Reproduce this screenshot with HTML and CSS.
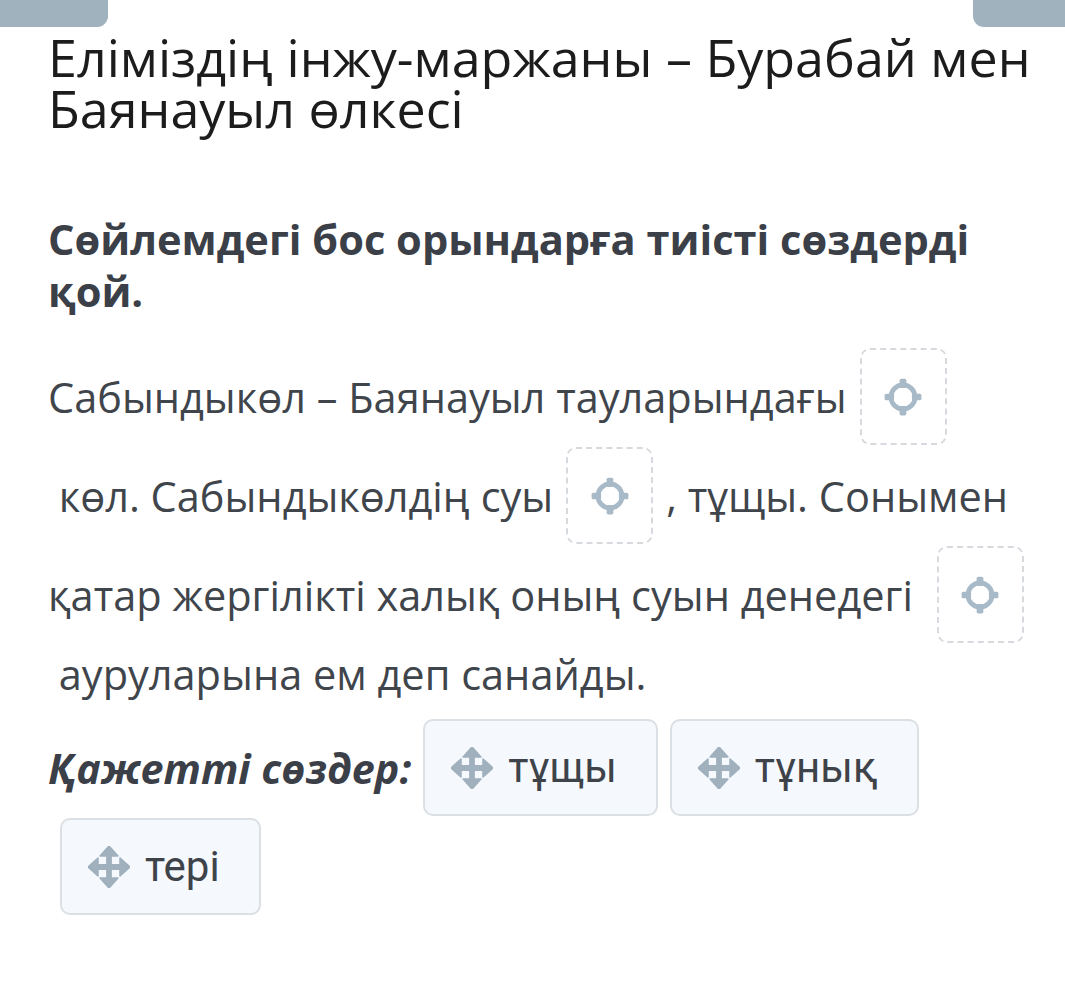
FILE: index.html
```html
<!DOCTYPE html>
<html lang="kk">
<head>
<meta charset="utf-8">
<title>Еліміздің інжу-маржаны</title>
<link rel="stylesheet" href="styles.css">
</head>
<body>
<div class="tabs">
  <div class="tab tab-left"></div>
  <div class="tab tab-right"></div>
</div>
<main class="content">
  <h1 class="title">Еліміздің інжу-маржаны – Бурабай мен Баянауыл өлкесі</h1>
  <h2 class="question">Сөйлемдегі бос орындарға тиісті сөздерді қой.</h2>
  <p class="sentence"><span>Сабындыкөл – Баянауыл тауларындағы</span><span class="drop"><svg class="target" viewBox="0 0 40 40" width="42" height="42"><circle cx="20" cy="20" r="11.5" fill="none" stroke="currentColor" stroke-width="4.5"/><rect x="16.8" y="2.5" width="6.4" height="9" rx="1.5" fill="currentColor"/><rect x="16.8" y="28.5" width="6.4" height="9" rx="1.5" fill="currentColor"/><rect x="2.5" y="16.8" width="9" height="6.4" rx="1.5" fill="currentColor"/><rect x="28.5" y="16.8" width="9" height="6.4" rx="1.5" fill="currentColor"/></svg></span><span>&nbsp;көл. Сабындыкөлдің суы</span><span class="drop"><svg class="target" viewBox="0 0 40 40" width="42" height="42"><circle cx="20" cy="20" r="11.5" fill="none" stroke="currentColor" stroke-width="4.5"/><rect x="16.8" y="2.5" width="6.4" height="9" rx="1.5" fill="currentColor"/><rect x="16.8" y="28.5" width="6.4" height="9" rx="1.5" fill="currentColor"/><rect x="2.5" y="16.8" width="9" height="6.4" rx="1.5" fill="currentColor"/><rect x="28.5" y="16.8" width="9" height="6.4" rx="1.5" fill="currentColor"/></svg></span><span>, тұщы. Сонымен қатар жергілікті халық оның суын денедегі </span><span class="drop"><svg class="target" viewBox="0 0 40 40" width="42" height="42"><circle cx="20" cy="20" r="11.5" fill="none" stroke="currentColor" stroke-width="4.5"/><rect x="16.8" y="2.5" width="6.4" height="9" rx="1.5" fill="currentColor"/><rect x="16.8" y="28.5" width="6.4" height="9" rx="1.5" fill="currentColor"/><rect x="2.5" y="16.8" width="9" height="6.4" rx="1.5" fill="currentColor"/><rect x="28.5" y="16.8" width="9" height="6.4" rx="1.5" fill="currentColor"/></svg></span><span>&nbsp;ауруларына ем деп санайды.</span></p>
  <div class="words"><span class="label">Қажетті сөздер:</span><span class="chip"><span class="chip-inner"><svg class="move" viewBox="0 0 40 40" width="42" height="42"><path d="M20 8 V32 M8 20 H32" stroke="currentColor" stroke-width="5.5" fill="none"/><path d="M20 0 L28.5 9.5 H11.5 Z M20 40 L28.5 30.5 H11.5 Z M0 20 L9.5 11.5 V28.5 Z M40 20 L30.5 11.5 V28.5 Z" fill="currentColor" stroke="currentColor" stroke-width="1.5" stroke-linejoin="round"/></svg><span class="chip-text">тұщы</span></span></span><span class="chip"><span class="chip-inner"><svg class="move" viewBox="0 0 40 40" width="42" height="42"><path d="M20 8 V32 M8 20 H32" stroke="currentColor" stroke-width="5.5" fill="none"/><path d="M20 0 L28.5 9.5 H11.5 Z M20 40 L28.5 30.5 H11.5 Z M0 20 L9.5 11.5 V28.5 Z M40 20 L30.5 11.5 V28.5 Z" fill="currentColor" stroke="currentColor" stroke-width="1.5" stroke-linejoin="round"/></svg><span class="chip-text">тұнық</span></span></span><span class="chip"><span class="chip-inner"><svg class="move" viewBox="0 0 40 40" width="42" height="42"><path d="M20 8 V32 M8 20 H32" stroke="currentColor" stroke-width="5.5" fill="none"/><path d="M20 0 L28.5 9.5 H11.5 Z M20 40 L28.5 30.5 H11.5 Z M0 20 L9.5 11.5 V28.5 Z M40 20 L30.5 11.5 V28.5 Z" fill="currentColor" stroke="currentColor" stroke-width="1.5" stroke-linejoin="round"/></svg><span class="chip-text">тері</span></span></span></div>
</main>
</body>
</html>
```

FILE: styles.css
```css
* { box-sizing: border-box; }

html, body {
  margin: 0;
  padding: 0;
  background: #ffffff;
}

body {
  font-family: "Open Sans", "Noto Sans", sans-serif;
  color: #3e434a;
}

.tabs {
  display: flex;
  justify-content: space-between;
  height: 27px;
}

.tab {
  height: 27px;
  background: #9fb2be;
}

.tab-left {
  width: 108px;
  border-bottom-right-radius: 11px;
}

.tab-right {
  width: 92px;
  border-bottom-left-radius: 11px;
}

.content {
  padding: 0 20px 40px 48px;
}

.title {
  margin: 4px 0 0;
  font-size: 52px;
  line-height: 51px;
  font-weight: 400;
  color: #1c1c1c;
}

.question {
  margin: 80px 0 0;
  font-size: 41.6px;
  line-height: 52px;
  font-weight: 700;
  color: #3b4048;
}

.sentence {
  margin: 30px 0 0;
  font-size: 41.5px;
  line-height: 60px;
  color: #40454c;
}

.drop {
  display: inline-block;
  overflow: hidden;
  width: 87px;
  height: 97px;
  margin: 1px 13px;
  vertical-align: -33px;
  border: 2px dashed #d6dade;
  border-radius: 10px;
  color: #a8bac8;
  text-align: center;
  padding-top: 26px;
  line-height: 0;
}

.target {
  display: inline-block;
}

.words {
  margin-top: 14px;
  font-size: 41.3px;
  line-height: 60px;
}

.label {
  font-weight: 700;
  font-style: italic;
  font-size: 41.3px;
  color: #3b4048;
}

.chip {
  display: inline-block;
  overflow: hidden;
  height: 97px;
  margin: 1px 0 1px 12px;
  vertical-align: -33px;
  background: #f5f8fc;
  border: 2px solid #dbe0e5;
  border-radius: 10px;
}

.chip-inner {
  display: flex;
  align-items: center;
  gap: 15px;
  height: 100%;
  padding: 0 39px 0 26px;
}

.move {
  flex: none;
  color: #a0b0bd;
}

.chip-text {
  font-family: "Roboto", "Noto Sans", sans-serif;
  font-size: 42px;
  color: #3e434a;
}
```
